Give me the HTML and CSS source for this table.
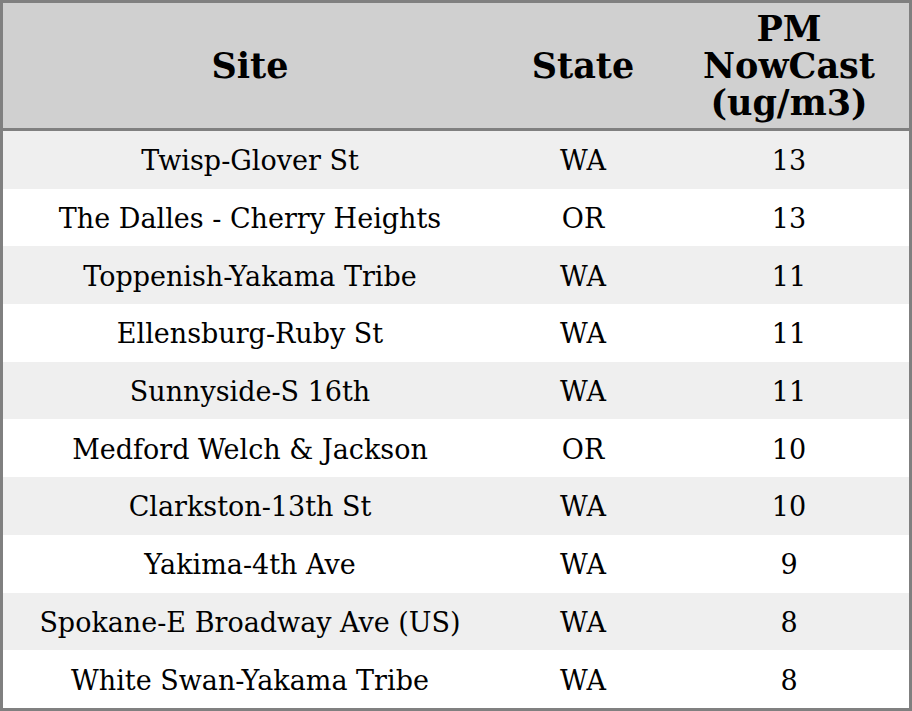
FILE: index.html
```html
<!DOCTYPE html>
<html>
<head>
<meta charset="utf-8">
<link rel="stylesheet" href="styles.css">
</head>
<body>
<table class="data">
  <colgroup>
    <col class="c-site">
    <col class="c-state">
    <col class="c-pm">
  </colgroup>
  <thead>
    <tr>
      <th>Site</th>
      <th>State</th>
      <th>PM<br>NowCast<br>(ug/m3)</th>
    </tr>
  </thead>
  <tbody>
    <tr><td>Twisp-Glover St</td><td>WA</td><td>13</td></tr>
    <tr><td>The Dalles - Cherry Heights</td><td>OR</td><td>13</td></tr>
    <tr><td>Toppenish-Yakama Tribe</td><td>WA</td><td>11</td></tr>
    <tr><td>Ellensburg-Ruby St</td><td>WA</td><td>11</td></tr>
    <tr><td>Sunnyside-S 16th</td><td>WA</td><td>11</td></tr>
    <tr><td>Medford Welch &amp; Jackson</td><td>OR</td><td>10</td></tr>
    <tr><td>Clarkston-13th St</td><td>WA</td><td>10</td></tr>
    <tr><td>Yakima-4th Ave</td><td>WA</td><td>9</td></tr>
    <tr><td>Spokane-E Broadway Ave (US)</td><td>WA</td><td>8</td></tr>
    <tr><td>White Swan-Yakama Tribe</td><td>WA</td><td>8</td></tr>
  </tbody>
</table>
</body>
</html>
```
FILE: styles.css
```css
html, body {
  margin: 0;
  padding: 0;
  background: #ffffff;
}
.data {
  width: 912px;
  height: 711px;
  border: 3px solid #808080;
  border-collapse: separate;
  border-spacing: 0;
  table-layout: fixed;
  font-family: "DejaVu Serif", serif;
  color: #000;
}
.c-site { width: 494px; }
.c-state { width: 172px; }
.c-pm { width: 240px; }
.data th {
  background: #d0d0d0;
  font-size: 35px;
  font-weight: bold;
  line-height: 37px;
  height: 128px;
  padding: 0;
  box-sizing: border-box;
  border-bottom: 3px solid #808080;
  text-align: center;
  vertical-align: middle;
}
.data td {
  font-size: 27px;
  height: 57.7px;
  padding: 2px 0 0 0;
  box-sizing: border-box;
  text-align: center;
  vertical-align: middle;
}
.data tbody tr:nth-child(odd) td {
  background: #efefef;
}
```
